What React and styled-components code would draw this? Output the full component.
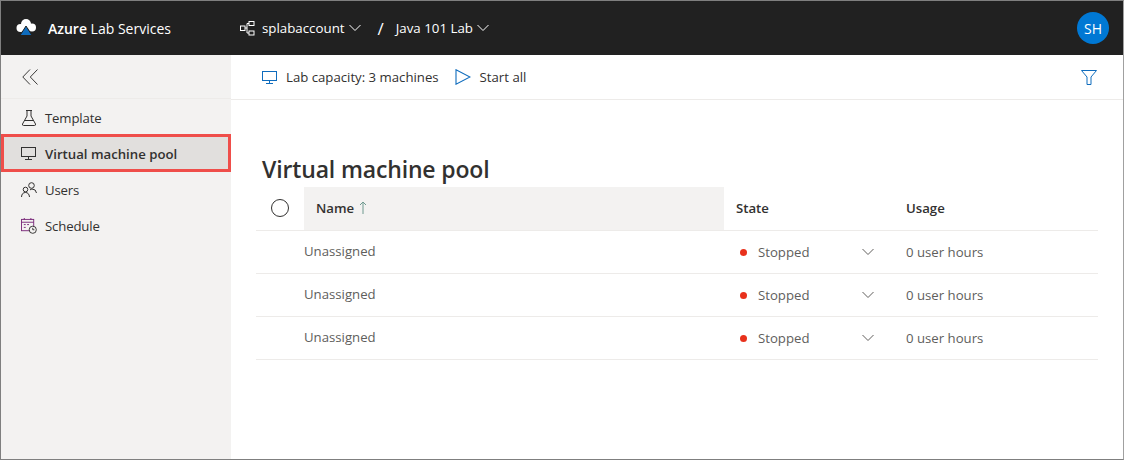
import styled, { createGlobalStyle } from 'styled-components';

const rows = [1, 2, 3];

function Chevron({ size = 12, color = '#fff' }) {
  return (
    <svg width={size} height={size} viewBox="0 0 12 12" fill="none" stroke={color} strokeWidth="1">
      <path d="M0.5 3 L6 8.5 L11.5 3" />
    </svg>
  );
}

function MonitorIcon({ color }) {
  return (
    <svg width="15" height="13" viewBox="0 0 15 13" fill="none" stroke={color} strokeWidth="1">
      <rect x="0.5" y="0.5" width="14" height="9" />
      <path d="M7.5 9.5 V12 M4 12.5 H11" />
    </svg>
  );
}

function App() {
  return (
    <Page>
      <GlobalStyle />
      <Header>
        <Brand>
          <svg width="22" height="18" viewBox="0 0 22 18">
            <circle cx="5.5" cy="9" r="4" fill="#fff" />
            <circle cx="11" cy="5" r="5" fill="#fff" />
            <circle cx="17" cy="8.5" r="4" fill="#fff" />
            <path d="M11 7 L17 16.5 H5 Z" fill="#0f6cbd" stroke="#212121" strokeWidth="1" />
          </svg>
          <BrandText>
            <b>Azure</b> Lab Services
          </BrandText>
        </Brand>
        <Crumbs>
          <svg width="15" height="15" viewBox="0 0 15 15" fill="none" stroke="#fff" strokeWidth="1">
            <rect x="0.5" y="5" width="4.5" height="4.5" />
            <rect x="9" y="0.5" width="5" height="4" />
            <rect x="9" y="10" width="5" height="4" />
            <path d="M5 7 H7 V2.5 H9 M7 7 V12 H9" />
          </svg>
          <Crumb>splabaccount</Crumb>
          <Chevron />
          <Slash>/</Slash>
          <Crumb $plain>Java 101 Lab</Crumb>
          <Chevron />
        </Crumbs>
        <Avatar>SH</Avatar>
      </Header>
      <Body>
        <Sidebar>
          <Collapse>
            <svg width="16" height="16" viewBox="0 0 16 16" fill="none" stroke="#3b3a39" strokeWidth="1">
              <path d="M8 0.5 L0.8 8 L8 15.5 M15.5 0.5 L8.3 8 L15.5 15.5" />
            </svg>
          </Collapse>
          <NavList>
            <NavItem>
              <svg width="16" height="16" viewBox="0 0 16 16" fill="none" stroke="#323130" strokeWidth="1">
                <path d="M5 0.5 H11 M6 0.5 V6 L1.5 14 Q1.2 15.5 2.5 15.5 H13.5 Q14.8 15.5 14.5 14 L10 6 V0.5 M4 10.5 H12" />
              </svg>
              Template
            </NavItem>
            <NavItem $active>
              <MonitorIcon color="#323130" />
              Virtual machine pool
            </NavItem>
            <NavItem>
              <svg width="16" height="16" viewBox="0 0 16 16" fill="none" stroke="#323130" strokeWidth="1">
                <circle cx="10.5" cy="3.5" r="2.8" />
                <circle cx="4.5" cy="7.5" r="2.3" />
                <path d="M0.5 15 Q0.8 10.5 4.5 10.5 Q8 10.5 8.5 15 M9 8 Q10 7 11 7 Q15 7 15.5 11" />
              </svg>
              Users
            </NavItem>
            <NavItem>
              <svg width="16" height="16" viewBox="0 0 17 17" fill="none" stroke="#7a2a7a" strokeWidth="1">
                <rect x="0.5" y="1.5" width="13" height="12" />
                <path d="M0.5 4.5 H13.5 M3.5 0 V2 M10.5 0 V2 M3 7 H5 M6.5 7 H8.5 M3 10 H5" />
                <circle cx="12.5" cy="12.5" r="3.8" fill="#f3f2f1" stroke="#323130" />
                <path d="M12.5 10.5 V12.5 H14.2" stroke="#323130" />
              </svg>
              Schedule
            </NavItem>
          </NavList>
        </Sidebar>
        <Main>
          <Toolbar>
            <ToolGroup>
              <MonitorIcon color="#0f6cbd" />
              Lab capacity: 3 machines
            </ToolGroup>
            <ToolGroup>
              <svg width="16" height="16" viewBox="0 0 16 16" fill="none" stroke="#0f6cbd" strokeWidth="1.1">
                <path d="M1 0.8 L15 8 L1 15.2 Z" />
              </svg>
              Start all
            </ToolGroup>
            <FilterButton>
              <svg width="16" height="15" viewBox="0 0 16 15" fill="none" stroke="#0f6cbd" strokeWidth="1">
                <path d="M0.5 0.5 H15.5 L10 7 V14.5 H6 V7 Z" />
              </svg>
            </FilterButton>
          </Toolbar>
          <Content>
            <Title>Virtual machine pool</Title>
            <HeadRow>
              <CheckCell>
                <Radio />
              </CheckCell>
              <NameHead>
                Name
                <svg width="8" height="13" viewBox="0 0 8 13" fill="none" stroke="#6f9a90" strokeWidth="1">
                  <path d="M4 13 V1 M1 4 L4 1 L7 4" />
                </svg>
              </NameHead>
              <StateHead>State</StateHead>
              <UsageHead>Usage</UsageHead>
            </HeadRow>
            {rows.map((row) => (
              <Row key={row}>
                <CheckCell />
                <NameCell>Unassigned</NameCell>
                <StateCell>
                  <Dot />
                  <StateLabel>Stopped</StateLabel>
                  <Chevron color="#605e5c" />
                </StateCell>
                <UsageCell>0 user hours</UsageCell>
              </Row>
            ))}
          </Content>
        </Main>
      </Body>
    </Page>
  );
}

export default App;

const GlobalStyle = createGlobalStyle`
  html, body {
    margin: 0;
    padding: 0;
    background: #fff;
  }
  body {
    font-family: "Open Sans", "Noto Sans", "Liberation Sans", sans-serif;
    font-size: 13.2px;
    color: #323130;
  }
`;

const Page = styled.div`
  width: 1124px;
  height: 460px;
  box-sizing: border-box;
  border: 1px solid #7f7f7f;
  border-right-color: #a0a0a0;
  display: flex;
  flex-direction: column;
  overflow: hidden;
`;

const Header = styled.header`
  height: 54px;
  flex: none;
  background: #212121;
  color: #fff;
  display: flex;
  align-items: center;
  padding: 0 14px 0 14px;
`;

const Brand = styled.div`
  width: 225px;
  display: flex;
  align-items: center;
  gap: 11px;
`;

const BrandText = styled.span`
  font-size: 14px;
  b {
    font-weight: 600;
  }
`;

const Crumbs = styled.nav`
  display: flex;
  align-items: center;
  flex: 1;
`;

const Crumb = styled.span`
  font-size: 13.3px;
  margin: 0 4px 0 ${(p) => (p.$plain ? '0' : '7px')};
`;

const Slash = styled.span`
  font-size: 17px;
  margin: 0 12px 0 17px;
`;

const Avatar = styled.div`
  width: 32px;
  height: 32px;
  border-radius: 50%;
  background: #0078d4;
  display: flex;
  align-items: center;
  justify-content: center;
  font-size: 14px;
`;

const Body = styled.div`
  flex: 1;
  display: flex;
  min-height: 0;
`;

const Sidebar = styled.aside`
  width: 230px;
  flex: none;
  background: #f3f2f1;
`;

const Collapse = styled.div`
  height: 44px;
  box-sizing: border-box;
  border-bottom: 1px solid #edebe9;
  display: flex;
  align-items: center;
  padding-left: 21px;
`;

const NavList = styled.div`
  display: flex;
  flex-direction: column;
  padding-top: 1px;
`;

const NavItem = styled.div`
  height: ${(p) => (p.$active ? '38px' : '36px')};
  margin-top: ${(p) => (p.$active ? '-2px' : '0')};
  box-sizing: border-box;
  display: flex;
  align-items: center;
  gap: ${(p) => (p.$active ? '9px' : '8px')};
  padding-left: ${(p) => (p.$active ? '17px' : '20px')};
  padding-top: ${(p) => (p.$active ? '1px' : '0')};
  letter-spacing: ${(p) => (p.$active ? '0' : '-0.15px')};
  font-weight: ${(p) => (p.$active ? 600 : 400)};
  background: ${(p) => (p.$active ? '#e1dfdd' : 'transparent')};
  border: ${(p) => (p.$active ? '3px solid #ef4e4a' : 'none')};
  svg {
    flex: none;
  }
`;

const Main = styled.main`
  flex: 1;
  min-width: 0;
  display: flex;
  flex-direction: column;
`;

const Toolbar = styled.div`
  height: 45px;
  flex: none;
  box-sizing: border-box;
  border-bottom: 1px solid #edebe9;
  display: flex;
  align-items: center;
  gap: 16px;
  padding: 0 26px 0 31px;
`;

const ToolGroup = styled.div`
  display: flex;
  align-items: center;
  gap: 9px;
`;

const FilterButton = styled.div`
  margin-left: auto;
  display: flex;
`;

const Content = styled.div`
  padding: 53px 25px 0;
`;

const Title = styled.h1`
  margin: 0 0 1px 6px;
  font-size: 23px;
  line-height: 33px;
  font-weight: 600;
  letter-spacing: -0.15px;
`;

const HeadRow = styled.div`
  height: 44px;
  box-sizing: border-box;
  border-bottom: 1px solid #edebe9;
  display: flex;
  font-weight: 600;
`;

const Row = styled.div`
  height: 43px;
  box-sizing: border-box;
  border-bottom: 1px solid #edebe9;
  display: flex;
  align-items: center;
  color: #605e5c;
`;

const CheckCell = styled.div`
  width: 48px;
  flex: none;
  display: flex;
  align-items: center;
  justify-content: center;
  height: 100%;
`;

const Radio = styled.div`
  width: 18px;
  height: 18px;
  box-sizing: border-box;
  border: 1px solid #323130;
  border-radius: 50%;
  margin-bottom: 2px;
`;

const NameHead = styled.div`
  width: 420px;
  flex: none;
  height: 43px;
  box-sizing: border-box;
  background: #f3f2f1;
  display: flex;
  align-items: center;
  gap: 5px;
  padding: 0 0 2px 12px;
`;

const StateHead = styled.div`
  width: 182px;
  flex: none;
  display: flex;
  align-items: center;
  padding: 0 0 2px 12px;
  box-sizing: border-box;
`;

const UsageHead = styled.div`
  display: flex;
  align-items: center;
  padding-bottom: 2px;
`;

const NameCell = styled.div`
  width: 420px;
  flex: none;
  margin-bottom: 2px;
`;

const StateCell = styled.div`
  width: 182px;
  flex: none;
  box-sizing: border-box;
  display: flex;
  align-items: center;
  padding: 0 32px 0 16px;
`;

const Dot = styled.span`
  width: 7px;
  height: 7px;
  border-radius: 50%;
  background: #e8311c;
  margin-right: 11px;
`;

const StateLabel = styled.span`
  flex: 1;
`;

const UsageCell = styled.div``;
